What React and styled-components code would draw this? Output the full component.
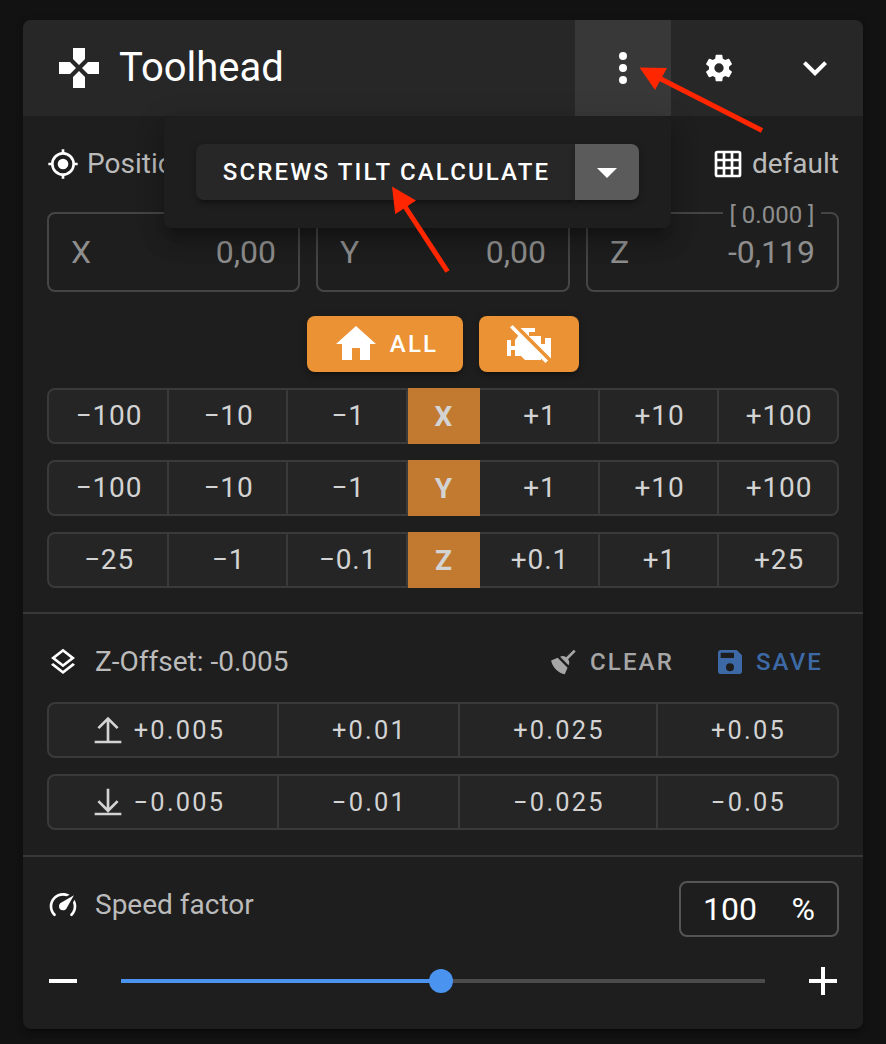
import React from 'react';
import styled, { createGlobalStyle } from 'styled-components';

const Global = createGlobalStyle`
  *, *::before, *::after { box-sizing: border-box; }
  body {
    margin: 0;
    background: #121212;
    color: #fff;
    font-family: Roboto, "Liberation Sans", sans-serif;
  }
  button { font: inherit; color: inherit; border: 0; padding: 0; background: none; }
`;

const icons = {
  gamepad: 'M16.5,9L13.5,12L16.5,15H22V9M9,16.5V22H15V16.5L12,13.5M7.5,9H2V15H7.5L10.5,12M15,7.5V2H9V7.5L12,10.5L15,7.5Z',
  dots: 'M12,16A2,2 0 0,1 14,18A2,2 0 0,1 12,20A2,2 0 0,1 10,18A2,2 0 0,1 12,16M12,10A2,2 0 0,1 14,12A2,2 0 0,1 12,14A2,2 0 0,1 10,12A2,2 0 0,1 12,10M12,4A2,2 0 0,1 14,6A2,2 0 0,1 12,8A2,2 0 0,1 10,6A2,2 0 0,1 12,4Z',
  cog: 'M12,15.5A3.5,3.5 0 0,1 8.5,12A3.5,3.5 0 0,1 12,8.5A3.5,3.5 0 0,1 15.5,12A3.5,3.5 0 0,1 12,15.5M19.43,12.97C19.47,12.65 19.5,12.33 19.5,12C19.5,11.67 19.47,11.34 19.43,11L21.54,9.37C21.73,9.22 21.78,8.95 21.66,8.73L19.66,5.27C19.54,5.05 19.27,4.96 19.05,5.05L16.56,6.05C16.04,5.66 15.5,5.32 14.87,5.07L14.5,2.42C14.46,2.18 14.25,2 14,2H10C9.75,2 9.54,2.18 9.5,2.42L9.13,5.07C8.5,5.32 7.96,5.66 7.44,6.05L4.95,5.05C4.73,4.96 4.46,5.05 4.34,5.27L2.34,8.73C2.21,8.95 2.27,9.22 2.46,9.37L4.57,11C4.53,11.34 4.5,11.67 4.5,12C4.5,12.33 4.53,12.65 4.57,12.97L2.46,14.63C2.27,14.78 2.21,15.05 2.34,15.27L4.34,18.73C4.46,18.95 4.73,19.03 4.95,18.95L7.44,17.94C7.96,18.34 8.5,18.68 9.13,18.93L9.5,21.58C9.54,21.82 9.75,22 10,22H14C14.25,22 14.46,21.82 14.5,21.58L14.87,18.93C15.5,18.67 16.04,18.34 16.56,17.94L19.05,18.95C19.27,19.03 19.54,18.95 19.66,18.73L21.66,15.27C21.78,15.05 21.73,14.78 21.54,14.63L19.43,12.97Z',
  chevron: 'M7.41,8.58L12,13.17L16.59,8.58L18,10L12,16L6,10L7.41,8.58Z',
  crosshairs: 'M12,8A4,4 0 0,1 16,12A4,4 0 0,1 12,16A4,4 0 0,1 8,12A4,4 0 0,1 12,8M3.05,13H1V11H3.05C3.5,6.83 6.83,3.5 11,3.05V1H13V3.05C17.17,3.5 20.5,6.83 20.95,11H23V13H20.95C20.5,17.17 17.17,20.5 13,20.95V23H11V20.95C6.83,20.5 3.5,17.17 3.05,13M12,5A7,7 0 0,0 5,12A7,7 0 0,0 12,19A7,7 0 0,0 19,12A7,7 0 0,0 12,5Z',
  grid: 'M10,4V8H14V4H10M16,4V8H20V4H16M16,10V14H20V10H16M16,16V20H20V16H16M14,20V16H10V20H14M8,20V16H4V20H8M8,14V10H4V14H8M8,8V4H4V8H8M10,14H14V10H10V14M4,2H20A2,2 0 0,1 22,4V20A2,2 0 0,1 20,22H4C2.92,22 2,21.1 2,20V4A2,2 0 0,1 4,2Z',
  home: 'M10,20V14H14V20H19V12H22L12,3L2,12H5V20H10Z',
  engineOff: 'M7.8,4H15V6H12V8H18V12H20V9H23V19.2ZM3.77,2.5L21.5,20.22L20.23,21.5L18,19.27V20H10L8,18H5V15H3V18H1V10H3V13H5V10L6.64,7.9L2.5,3.77Z',
  caret: 'M7,10L12,15L17,10H7Z',
  layers: 'M12,18.54L19.37,12.8L21,14.07L12,21.07L3,14.07L4.62,12.81L12,18.54M12,16L3,9L12,2L21,9L12,16M12,4.53L6.26,9L12,13.47L17.74,9L12,4.53Z',
  up: 'M13,5.83L18.5,11.33L19.92,9.92L12,2L4.08,9.92L5.5,11.33L11,5.83V20H2V22H22V20H13V5.83Z',
  down: 'M19.92,12.08L12,20L4.08,12.08L5.5,10.67L11,16.17V2H13V16.17L18.5,10.66L19.92,12.08M12,20H2V22H22V20H12Z',
  broom: 'M19.36,2.72L20.78,4.14L15.06,9.85C16.13,11.39 16.28,13.24 15.38,14.44L9.06,8.12C10.26,7.22 12.11,7.37 13.65,8.44L19.36,2.72M5.93,17.57C3.92,15.56 2.69,13.16 2.35,10.92L7.23,8.83L14.67,16.27L12.58,21.15C10.34,20.81 7.94,19.58 5.93,17.57Z',
  save: 'M15,9H5V5H15M12,19A3,3 0 0,1 9,16A3,3 0 0,1 12,13A3,3 0 0,1 15,16A3,3 0 0,1 12,19M17,3H5C3.89,3 3,3.9 3,5V19A2,2 0 0,0 5,21H19A2,2 0 0,0 21,19V7L17,3Z',
  speed: 'M12,16A3,3 0 0,1 9,13C9,11.88 9.61,10.9 10.5,10.39L20.21,4.77L14.68,14.35C14.18,15.33 13.17,16 12,16M12,3C13.81,3 15.5,3.5 16.97,4.32L14.87,5.53C14,5.19 13,5 12,5A8,8 0 0,0 4,13C4,15.21 4.89,17.21 6.34,18.65H6.35C6.74,19.04 6.74,19.67 6.35,20.06C5.96,20.45 5.32,20.45 4.93,20.07V20.07C3.12,18.26 2,15.76 2,13A10,10 0 0,1 12,3M22,13C22,15.76 20.88,18.26 19.07,20.07V20.07C18.68,20.45 18.05,20.45 17.66,20.06C17.27,19.67 17.27,19.04 17.66,18.65V18.65C19.11,17.2 20,15.21 20,13C20,12 19.81,11 19.46,10.1L20.67,8C21.5,9.5 22,11.18 22,13Z',
  minus: 'M19,13H5V11H19V13Z',
  plus: 'M19,13H13V19H11V13H5V11H11V5H13V11H19V13Z',
};

const Svg = styled.svg`
  display: block;
  flex: none;
  width: ${(p) => p.$size}px;
  height: ${(p) => p.$size}px;
  fill: currentColor;
`;
const Icon = ({ name, size = 32 }) => (
  <Svg $size={size} viewBox="0 0 24 24"><path d={icons[name]} /></Svg>
);

const Page = styled.div`
  position: relative;
  width: 886px;
  height: 1044px;
  padding: 20px 23px 15px;
  overflow: hidden;
`;
const Card = styled.section`
  position: relative;
  height: 1009px;
  border-radius: 8px;
  background: #1e1e1e;
  box-shadow: 0 6px 2px -4px rgba(0, 0, 0, .2), 0 4px 4px rgba(0, 0, 0, .14), 0 2px 10px rgba(0, 0, 0, .12);
`;
const Header = styled.header`
  display: flex;
  align-items: center;
  height: 96px;
  padding-left: 32px;
  border-radius: 8px 8px 0 0;
  background: #272727;
  overflow: hidden;
`;
const Title = styled.h1`
  flex: 1;
  margin: -1px 0 0 16px;
  font-size: 40px;
  font-weight: 400;
  line-height: 64px;
`;
const HeaderButton = styled.button`
  display: grid;
  place-items: center;
  width: 96px;
  height: 96px;
  background: ${(p) => (p.$active ? '#383838' : 'transparent')};
`;

const Menu = styled.div`
  position: absolute;
  z-index: 2;
  left: 141px;
  top: 96px;
  display: flex;
  padding: 28px 32px;
  width: 507px;
  height: 112px;
  border-radius: 8px;
  background: #1e1e1e;
  box-shadow: 0 10px 10px -6px rgba(0, 0, 0, .2), 0 16px 20px 2px rgba(0, 0, 0, .14), 0 6px 28px 4px rgba(0, 0, 0, .12);
`;
const buttonShadow = '0 6px 2px -4px rgba(0,0,0,.2), 0 4px 4px rgba(0,0,0,.14), 0 2px 10px rgba(0,0,0,.12)';
const MacroButton = styled.button`
  width: 379px;
  height: 56px;
  padding-left: 2px;
  border-radius: 8px 0 0 8px;
  background: #272727;
  box-shadow: ${buttonShadow};
  font-size: 24px;
  font-weight: 500;
  letter-spacing: 2.14px;
`;
const MacroToggle = styled.button`
  display: grid;
  place-items: center;
  width: 64px;
  height: 56px;
  border-radius: 0 8px 8px 0;
  background: #5b5b5b;
  box-shadow: ${buttonShadow};
`;

const Section = styled.div`
  padding: 0 24px ${(p) => p.$bottom || 24}px;
  border-top: ${(p) => (p.$divided ? '2px solid #383838' : '0')};
`;
const Row = styled.div`
  display: flex;
  align-items: center;
  height: 96px;
`;
const OffsetHeader = styled(Row)`
  height: 88px;
  padding-top: 8px;
`;
const Label = styled.span`
  flex: ${(p) => (p.$grow ? 1 : 'none')};
  margin-left: ${(p) => p.$gap}px;
  color: #bbb;
  font-size: 28px;
  line-height: 40px;
`;
const IconPad = styled.span`
  display: flex;
  margin-left: auto;
`;

const Fields = styled.div`
  display: grid;
  grid-template-columns: 253px 254px 253px;
  gap: 16px;
`;
const Field = styled.div`
  position: relative;
  display: flex;
  align-items: center;
  justify-content: space-between;
  height: 80px;
  padding: 0 22px;
  border: 2px solid #454545;
  border-radius: 8px;
  color: #8e8e8e;
  font-size: 32px;
`;
const FieldNote = styled.span`
  position: absolute;
  top: -13px;
  right: 16px;
  width: 98px;
  background: #1e1e1e;
  text-align: center;
  font-size: 24px;
  line-height: 28px;
`;

const Actions = styled.div`
  display: flex;
  justify-content: center;
  gap: 16px;
  margin: 24px 0 16px;
`;
const ActionButton = styled.button`
  display: flex;
  align-items: center;
  justify-content: center;
  gap: 10px;
  width: ${(p) => p.$width}px;
  height: 56px;
  border-radius: 8px;
  background: #eb9235;
  box-shadow: ${buttonShadow};
  font-size: 24px;
  font-weight: 500;
  letter-spacing: 2.14px;
`;

const ButtonRow = styled.div`
  display: grid;
  grid-template-columns: ${(p) => p.$columns};
  height: 56px;
  & + & { margin-top: 16px; }
`;
const Cell = styled.button`
  display: flex;
  align-items: center;
  justify-content: center;
  gap: 10px;
  padding: 0 0 2px 2px;
  border: solid #3a3a3a;
  border-width: 2px 2px 2px 0;
  background: #252525;
  color: #d3d3d3;
  font-size: 28px;
  letter-spacing: .9px;
  &:first-child { border-left-width: 2px; border-radius: 8px 0 0 8px; }
  &:last-child { border-radius: 0 8px 8px 0; }
`;
const AxisCell = styled(Cell)`
  border: 0;
  background: #c17a2f;
  font-weight: 700;
  letter-spacing: 0;
  padding: 0 1px 0 0;
`;
const OffsetCell = styled(Cell)`
  padding: 0 0 0 2px;
  font-size: 25.4px;
  letter-spacing: 2.25px;
  &:first-child { padding: 0 9px 0 0; }
`;

const TextButton = styled.button`
  display: flex;
  align-items: center;
  gap: 10px;
  margin-left: ${(p) => p.$gap || 0}px;
  margin-right: ${(p) => p.$end || 0}px;
  color: ${(p) => p.$color};
  font-size: 24px;
  font-weight: 500;
  letter-spacing: 2.14px;
`;

const SpeedRow = styled.div`
  display: flex;
  align-items: flex-start;
  height: 56px;
  margin-top: 24px;
`;
const SpeedLabel = styled.div`
  display: flex;
  flex: 1;
  align-items: center;
  height: 48px;
`;
const PercentField = styled.div`
  display: flex;
  align-items: center;
  justify-content: space-between;
  width: 160px;
  height: 56px;
  padding: 0 22px;
  border: 2px solid #555;
  border-radius: 8px;
  font-size: 32px;
`;
const SliderRow = styled.div`
  display: flex;
  align-items: center;
  justify-content: space-between;
  height: 48px;
  margin: 20px -8px 0;
`;
const Track = styled.div`
  display: flex;
  align-items: center;
  width: 644px;
  height: 4px;
  background: #4b4b4b;
`;
const Fill = styled.div`
  height: 4px;
  background: #4a93ee;
`;
const Thumb = styled.div`
  width: 24px;
  height: 24px;
  margin-left: -12px;
  border-radius: 50%;
  background: #4a93ee;
`;

const Annotations = styled.svg`
  position: absolute;
  z-index: 3;
  inset: 0;
  pointer-events: none;
  fill: #ff2600;
  stroke: #ff2600;
`;

const jogRows = [
  ['X', ['−100', '−10', '−1'], ['+1', '+10', '+100']],
  ['Y', ['−100', '−10', '−1'], ['+1', '+10', '+100']],
  ['Z', ['−25', '−1', '−0.1'], ['+0.1', '+1', '+25']],
];
const offsetRows = [
  ['up', ['+0.005', '+0.01', '+0.025', '+0.05']],
  ['down', ['−0.005', '−0.01', '−0.025', '−0.05']],
];

export default function App() {
  const speed = 100;
  return (
    <Page>
      <Global />
      <Card>
        <Header>
          <Icon name="gamepad" size={48} />
          <Title>Toolhead</Title>
          <HeaderButton $active><Icon name="dots" size={48} /></HeaderButton>
          <HeaderButton><Icon name="cog" /></HeaderButton>
          <HeaderButton><Icon name="chevron" size={48} /></HeaderButton>
        </Header>

        <Menu>
          <MacroButton>SCREWS TILT CALCULATE</MacroButton>
          <MacroToggle><Icon name="caret" size={48} /></MacroToggle>
        </Menu>

        <Section>
          <Row>
            <Icon name="crosshairs" />
            <Label $gap={8}>Position</Label>
            <IconPad><Icon name="grid" /></IconPad>
            <Label $gap={8}>default</Label>
          </Row>
          <Fields>
            <Field><span>X</span><span>0,00</span></Field>
            <Field><span>Y</span><span>0,00</span></Field>
            <Field><span>Z</span><span>-0,119</span><FieldNote>[ 0.000 ]</FieldNote></Field>
          </Fields>
          <Actions>
            <ActionButton $width={156}><Icon name="home" size={48} />ALL</ActionButton>
            <ActionButton $width={100}><Icon name="engineOff" size={48} /></ActionButton>
          </Actions>
          {jogRows.map(([axis, minus, plus]) => (
            <ButtonRow key={axis} $columns="122px 119px 120px 72px 120px 119px 120px">
              {minus.map((v) => <Cell key={v}>{v}</Cell>)}
              <AxisCell>{axis}</AxisCell>
              {plus.map((v) => <Cell key={v}>{v}</Cell>)}
            </ButtonRow>
          ))}
        </Section>

        <Section $divided $bottom={25}>
          <OffsetHeader>
            <Icon name="layers" />
            <Label $gap={16} $grow>Z-Offset: -0.005</Label>
            <TextButton $color="#a6a6a6"><Icon name="broom" />CLEAR</TextButton>
            <TextButton $color="#3d6aa6" $gap={40} $end={16}><Icon name="save" />SAVE</TextButton>
          </OffsetHeader>
          {offsetRows.map(([icon, values]) => (
            <ButtonRow key={icon} $columns="232px 181px 198px 181px">
              {values.map((v, i) => (
                <OffsetCell key={v}>{i === 0 && <Icon name={icon} />}{v}</OffsetCell>
              ))}
            </ButtonRow>
          ))}
        </Section>

        <Section $divided>
          <SpeedRow>
            <SpeedLabel>
              <Icon name="speed" />
              <Label $gap={16}>Speed factor</Label>
            </SpeedLabel>
            <PercentField><span>{speed}</span><span>%</span></PercentField>
          </SpeedRow>
          <SliderRow>
            <Icon name="minus" size={48} />
            <Track><Fill style={{ width: `${speed * 3.2}px` }} /><Thumb /></Track>
            <Icon name="plus" size={48} />
          </SliderRow>
        </Section>
      </Card>

      <Annotations width="886" height="1044" viewBox="0 0 886 1044">
        <path stroke="none" d="M639.5,67.5L667,68L655,90Z" />
        <path strokeWidth="5" d="M658,77.5L762,130.5" />
        <path stroke="none" d="M392,186.5L416,200.5L395.2,214.3Z" />
        <path strokeWidth="5" d="M404,205L447.5,271.5" />
      </Annotations>
    </Page>
  );
}
